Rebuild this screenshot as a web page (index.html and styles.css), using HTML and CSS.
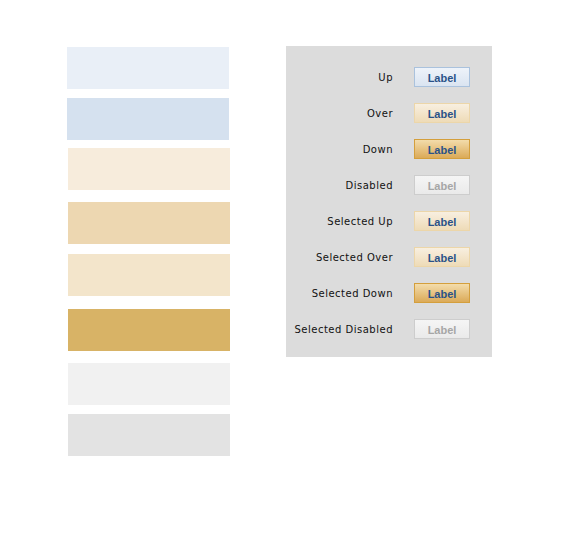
FILE: index.html
```html
<!DOCTYPE html>
<html>
<head>
<meta charset="utf-8">
<link rel="stylesheet" href="styles.css">
</head>
<body>
<div class="page">
  <div class="swatches">
    <div class="sw s1"></div>
    <div class="sw s2"></div>
    <div class="sw s3"></div>
    <div class="sw s4"></div>
    <div class="sw s5"></div>
    <div class="sw s6"></div>
    <div class="sw s7"></div>
    <div class="sw s8"></div>
  </div>
  <div class="panel">
    <div class="row"><span class="lbl">Up</span><span class="btn up">Label</span></div>
    <div class="row"><span class="lbl">Over</span><span class="btn over">Label</span></div>
    <div class="row"><span class="lbl">Down</span><span class="btn down">Label</span></div>
    <div class="row"><span class="lbl">Disabled</span><span class="btn dis">Label</span></div>
    <div class="row"><span class="lbl">Selected Up</span><span class="btn over">Label</span></div>
    <div class="row"><span class="lbl">Selected Over</span><span class="btn over">Label</span></div>
    <div class="row"><span class="lbl">Selected Down</span><span class="btn down">Label</span></div>
    <div class="row"><span class="lbl">Selected Disabled</span><span class="btn dis">Label</span></div>
  </div>
</div>
</body>
</html>
```
FILE: styles.css
```css
html, body {
  margin: 0;
  padding: 0;
  background: #ffffff;
}
.page {
  display: flex;
  align-items: flex-start;
  padding: 46px 0 0 67px;
}
.swatches {
  display: flex;
  flex-direction: column;
  width: 163px;
  padding-top: 1px;
}
.sw {
  height: 42px;
  width: 162px;
}
.s1 { background: #e9eff7; }
.s2 { background: #d5e1ef; margin-top: 9px; }
.s3 { background: #f7ecdc; margin-top: 8px; margin-left: 1px; }
.s4 { background: #edd7b1; margin-top: 12px; margin-left: 1px; }
.s5 { background: #f3e5cb; margin-top: 10px; margin-left: 1px; }
.s6 { background: #d8b366; margin-top: 13px; margin-left: 1px; }
.s7 { background: #f1f1f1; margin-top: 12px; margin-left: 1px; }
.s8 { background: #e3e3e3; margin-top: 9px; margin-left: 1px; }
.panel {
  margin-left: 56px;
  width: 206px;
  box-sizing: border-box;
  background: #dcdcdc;
  padding: 21px 22px 18px 0;
  display: flex;
  flex-direction: column;
  gap: 16px;
}
.row {
  display: flex;
  align-items: center;
  justify-content: flex-end;
  height: 20px;
}
.lbl {
  font-family: "DejaVu Sans", Verdana, sans-serif;
  font-size: 10px;
  letter-spacing: 0.5px;
  color: #111111;
  margin-right: 21px;
  line-height: 12px;
  padding-top: 1px;
}
.btn {
  box-sizing: border-box;
  width: 56px;
  height: 20px;
  border: 1px solid;
  display: flex;
  align-items: center;
  justify-content: center;
  font-family: "Liberation Sans", Arial, sans-serif;
  font-weight: bold;
  font-size: 11px;
  color: #2a5288;
  padding-top: 1px;
}
.up {
  border-color: #aac2dd;
  background: linear-gradient(#eef3fa, #dae4f1);
}
.over {
  border-color: #ecd6a9;
  background: linear-gradient(#f8efe0, #eedbb7);
}
.down {
  border-color: #d49f3c;
  background: linear-gradient(#f3dcab, #dbaa58);
}
.dis {
  border-color: #cdcdcd;
  background: linear-gradient(#f5f5f5, #eaeaea);
  color: #a6a6a6;
}
```
